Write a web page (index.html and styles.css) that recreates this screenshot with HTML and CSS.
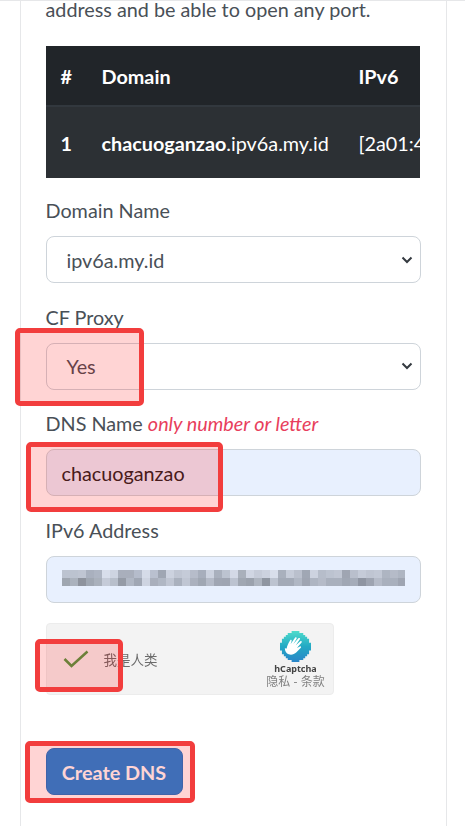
FILE: index.html
```html
<!DOCTYPE html>
<html lang="en">
<head>
<meta charset="utf-8">
<title>Create DNS</title>
<link rel="stylesheet" href="styles.css">
</head>
<body>
<main class="card">
  <p class="intro">address and be able to open any port.</p>
  <div class="table-wrap">
    <table class="dns-table">
      <thead>
        <tr><th class="col-num">#</th><th class="col-domain">Domain</th><th class="col-ip">IPv6</th></tr>
      </thead>
      <tbody>
        <tr><th class="col-num">1</th><td class="col-domain"><b>chacuoganzao</b>.ipv6a.my.id</td><td class="col-ip">[2a01:4f8:c17::1]</td></tr>
      </tbody>
    </table>
  </div>
  <form class="form">
    <div class="field">
      <div class="label">Domain Name</div>
      <div class="control select"><span>ipv6a.my.id</span><svg class="chev" viewBox="0 0 12 8"><path d="M1.500 1.500 6 6l4.500-4.500" fill="none" stroke="#343a40" stroke-width="2"/></svg></div>
    </div>
    <div class="field">
      <div class="label">CF Proxy</div>
      <div class="control select"><span>Yes</span><svg class="chev" viewBox="0 0 12 8"><path d="M1.500 1.500 6 6l4.500-4.500" fill="none" stroke="#343a40" stroke-width="2"/></svg></div>
    </div>
    <div class="field">
      <div class="label">DNS Name <em>only number or letter</em></div>
      <div class="control filled"><span>chacuoganzao</span></div>
    </div>
    <div class="field">
      <div class="label">IPv6 Address</div>
      <div class="control filled">
        <svg class="mosaic" viewBox="0 0 344 16" shape-rendering="crispEdges">
          <g>
            <rect x="0" fill="#bcc3d0"/><rect x="8" fill="#bcc3d0"/><rect x="16" fill="#bfc5d2"/><rect x="24" fill="#a9b0be"/><rect x="32" fill="#aeb5c3"/><rect x="40" fill="#d8deeb"/><rect x="48" fill="#ced4e1"/><rect x="56" fill="#a9afbc"/><rect x="64" fill="#a9afbc"/><rect x="72" fill="#b5bccb"/><rect x="80" fill="#d5dbe8"/><rect x="88" fill="#b9c0cf"/><rect x="96" fill="#9fa6b3"/><rect x="104" fill="#ccd2df"/><rect x="112" fill="#c0c6d3"/><rect x="120" fill="#c5cbd8"/><rect x="128" fill="#b6bcca"/><rect x="136" fill="#a7aebc"/><rect x="144" fill="#ccd2df"/><rect x="152" fill="#a9b0bd"/><rect x="160" fill="#bcc3d0"/><rect x="168" fill="#d3d9e6"/><rect x="176" fill="#a9b0bb"/><rect x="184" fill="#d0d6e3"/><rect x="192" fill="#c6ccd9"/><rect x="200" fill="#ccd2df"/><rect x="208" fill="#d8deeb"/><rect x="216" fill="#a9b0bd"/><rect x="224" fill="#c6ccd9"/><rect x="232" fill="#bac0cd"/><rect x="240" fill="#a0a7b4"/><rect x="248" fill="#cdd3e0"/><rect x="256" fill="#b6bdca"/><rect x="264" fill="#bcc3d0"/><rect x="272" fill="#c0c6d3"/><rect x="280" fill="#9fa5b2"/><rect x="288" fill="#b9bfcc"/><rect x="296" fill="#c5cbd8"/><rect x="304" fill="#bfc5d2"/><rect x="312" fill="#c2c8d5"/><rect x="320" fill="#aeb5c2"/><rect x="328" fill="#b5bbc8"/><rect x="336" fill="#aeb5c2"/>
          </g>
          <g transform="translate(0 8)">
            <rect x="0" fill="#9fa6b0"/><rect x="8" fill="#abb2bd"/><rect x="16" fill="#8e939d"/><rect x="24" fill="#a0a7b2"/><rect x="32" fill="#aab1bc"/><rect x="40" fill="#c5cbd8"/><rect x="48" fill="#b8bfcb"/><rect x="56" fill="#959ba6"/><rect x="64" fill="#b0b7c4"/><rect x="72" fill="#a0a7b4"/><rect x="80" fill="#ced4e1"/><rect x="88" fill="#a9afbc"/><rect x="96" fill="#b0b7c4"/><rect x="104" fill="#c0c6d3"/><rect x="112" fill="#aab1be"/><rect x="120" fill="#c0c6d3"/><rect x="128" fill="#abb1be"/><rect x="136" fill="#a0a7b3"/><rect x="144" fill="#b5bbc8"/><rect x="152" fill="#a0a6b3"/><rect x="160" fill="#9fa5b2"/><rect x="168" fill="#bcc3d0"/><rect x="176" fill="#a0a7b2"/><rect x="184" fill="#9ba2ad"/><rect x="192" fill="#aeb5c0"/><rect x="200" fill="#8f96a1"/><rect x="208" fill="#bcc3d0"/><rect x="216" fill="#a3aab7"/><rect x="224" fill="#a3aab7"/><rect x="232" fill="#b0b7c4"/><rect x="240" fill="#9fa5b2"/><rect x="248" fill="#aeb5c2"/><rect x="256" fill="#b5bbc8"/><rect x="264" fill="#a9b0bd"/><rect x="272" fill="#a9b0bd"/><rect x="280" fill="#a0a7b4"/><rect x="288" fill="#a5acb9"/><rect x="296" fill="#8f95a2"/><rect x="304" fill="#9ea4b1"/><rect x="312" fill="#b5bbc8"/><rect x="320" fill="#a9b0bd"/><rect x="328" fill="#a9b0bd"/><rect x="336" fill="#9fa5b2"/>
          </g>
        </svg>
      </div>
    </div>
    <div class="captcha">
      <svg class="check" viewBox="0 0 26 18"><path d="M1.500 9l7 7L24.500 1.500" fill="none" stroke="#4f9a45" stroke-width="2.500"/></svg>
      <span class="captcha-text">我是人类</span>
      <div class="captcha-brand">
        <svg class="hlogo" viewBox="0 0 32 32">
          <defs>
            <linearGradient id="hgrad" x1="0" y1="0" x2="0" y2="1">
              <stop offset="0" stop-color="#4fdccb"/>
              <stop offset=".5" stop-color="#22a9c4"/>
              <stop offset="1" stop-color="#2a85c8"/>
            </linearGradient>
          </defs>
          <path fill="url(#hgrad)" d="M12 0h8v2h4v2h2v2h2v2h2v4h2v8h-2v4h-2v2h-2v2h-2v2h-4v2h-8v-2H8v-2H6v-2H4v-2H2v-4H0v-8h2V8h2V6h2V4h2V2h4z"/>
          <path fill="#fff" d="M7 18c0-2 1-4 2-6l1.500-2.500c.7-.9 1.800-.3 1.500.8l-1 3.200 4.500-6.500c.8-1 2.200-.2 1.600 1l-3.300 5.500 5.200-6c.9-.9 2.200 0 1.500 1.100l-4.200 6 4.700-4c1-.7 2 .3 1.300 1.300l-4.800 5.600 3-1.600c1-.4 1.700.7 1 1.500l-4.500 4.600c-2.500 2.300-5.500 3-8 2-2.500-1-4-3.300-4-6.300z"/>
        </svg>
        <div class="hname">hCaptcha</div>
        <div class="hlinks">隐私 - 条款</div>
      </div>
    </div>
    <button class="submit" type="button">Create DNS</button>
  </form>
  <span class="mark mark-proxy"></span>
  <span class="mark mark-dns"></span>
  <span class="mark mark-check"></span>
  <span class="mark mark-button"></span>
</main>
</body>
</html>
```

FILE: styles.css
```css
html, body {
  margin: 0;
  padding: 0;
  height: 100%;
  overflow: hidden;
  background: #fff;
}
body {
  font-family: Lato, "Noto Sans CJK SC", sans-serif;
  font-size: 19.800px;
  color: #495057;
  border-top: 1px solid #e6e7e9;
  box-sizing: border-box;
  padding: 0 18.500px 0 20px;
}
.card {
  position: relative;
  display: flow-root;
  height: 100%;
  box-sizing: border-box;
  border-left: 1.500px solid #e6e7e9;
  border-right: 1.500px solid #e6e7e9;
  padding: 0 24.500px;
}
.intro {
  margin: -6px 0 22px;
  line-height: 29px;
}
.table-wrap {
  overflow: hidden;
  width: 374.500px;
}
.dns-table {
  border-collapse: collapse;
  color: #fff;
  white-space: nowrap;
  table-layout: fixed;
  width: 520px;
}
.dns-table th, .dns-table td {
  text-align: left;
  padding: 0 0 0 15px;
  font-weight: 400;
}
.dns-table th, .dns-table b { font-weight: 700; }
.dns-table thead tr { background: #212529; height: 60px; }
.dns-table tbody tr { background: #2c3034; height: 72px; border-top: 2px solid #32383e; }
.col-num { width: 26px; }
.col-domain { width: 242px; }
.form { margin-top: 20px; }
.field { margin-bottom: 21.500px; }
.label {
  line-height: 24px;
  margin-bottom: 14px;
}
.label em { color: #e83e5c; font-style: italic; }
.control {
  box-sizing: border-box;
  height: 47px;
  border: 1px solid #ced4da;
  border-radius: 8px;
  display: flex;
  align-items: center;
  justify-content: space-between;
}
.select { padding: 0 7px 0 20px; background: #fff; }
.filled { padding: 0 15px; background: #e8f0fe; color: #222; }
.chev { width: 12px; height: 8px; }
.mosaic { width: 344px; height: 16px; margin-bottom: 3px; filter: blur(.3px); }
.mosaic rect { width: 8px; height: 8px; }
.captcha {
  box-sizing: border-box;
  width: 288px;
  height: 72px;
  margin-top: -1px;
  background: #f3f3f3;
  border: 1px solid #ececec;
  border-radius: 4px;
  display: flex;
  align-items: center;
  padding: 0 7px 0 16px;
}
.check { width: 26px; height: 18px; margin-right: 15px; flex: none; }
.captcha-text { font-size: 13.500px; color: #6b6b6b; flex: 1; filter: blur(.3px); }
.captcha-brand {
  display: flex;
  flex-direction: column;
  align-items: center;
  width: 60px;
  filter: blur(.4px);
}
.hlogo { width: 31px; height: 31px; }
.hname { font-family: "Noto Sans", sans-serif; font-size: 9px; font-weight: 700; color: #444; line-height: 11px; margin-top: 1px; }
.hlinks { font-size: 12px; color: #808080; line-height: 13px; margin-top: 1px; }
.submit {
  display: block;
  margin-top: 53px;
  box-sizing: border-box;
  width: 137px;
  height: 47px;
  border: 1px solid #1a78cc;
  border-radius: 8px;
  background: #1a85dd;
  color: #fff;
  font: 700 19.800px Lato, sans-serif;
}
.mark {
  position: absolute;
  box-sizing: border-box;
  background: rgba(255, 0, 0, .17);
  border: 5px solid #f23d3d;
  border-radius: 5px;
}
.mark-proxy { left: -6.500px; top: 327px; width: 129px; height: 78px; }
.mark-dns { left: 4.500px; top: 441px; width: 197px; height: 70px; }
.mark-check { left: 13.500px; top: 638px; width: 88px; height: 53px; }
.mark-button { left: 3.500px; top: 740px; width: 170px; height: 62px; }
```
